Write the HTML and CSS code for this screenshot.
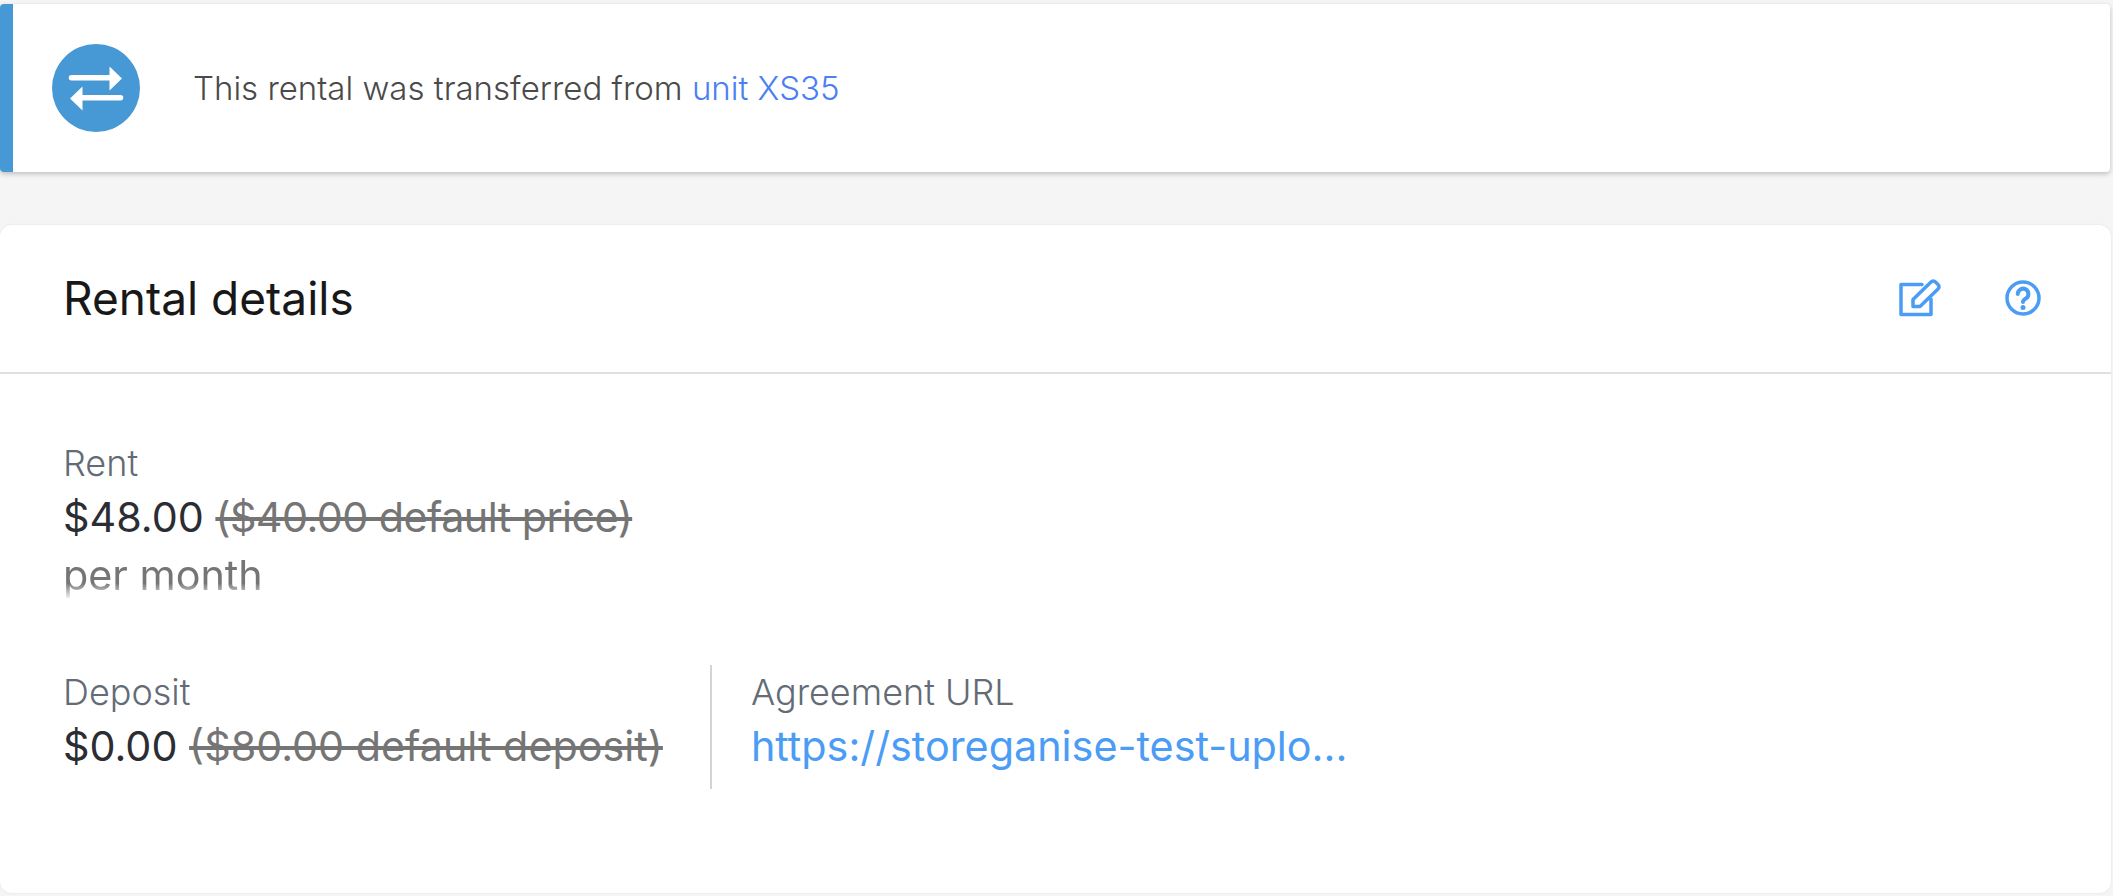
FILE: index.html
```html
<!DOCTYPE html>
<html lang="en">
<head>
<meta charset="utf-8">
<title>Rental details</title>
<link rel="stylesheet" href="styles.css">
</head>
<body>
<section class="notice">
  <span class="notice-icon">
    <svg width="88" height="88" viewBox="0 0 88 88" fill="#fff">
      <path d="M19.500 31h38v-8.500l12.500 12-12.500 12V36.500h-38a2.700 2.700 0 0 1 0-5.500z"/>
      <path d="M68.500 51h-38v-8.500L18 54.500l12.500 12V56.500h38a2.700 2.700 0 0 0 0-5.500z"/>
    </svg>
  </span>
  <p class="notice-text">This rental was transferred from <a href="#">unit XS35</a></p>
</section>
<section class="card">
  <header class="card-head">
    <h2>Rental details</h2>
    <div class="actions">
      <svg width="42" height="38" viewBox="0 0 42 38" fill="none" stroke="#4b9cf5" stroke-width="3.500" stroke-linecap="round" stroke-linejoin="round"><path d="M23 5.500H2v30h30V20"/><path d="M14 27.500v-7L32 3a3 3 0 0 1 4.500 0L39 5.500a3 3 0 0 1 0 4.500L21 27.500z"/></svg>
      <svg width="36" height="36" viewBox="0 0 36 36" fill="none" stroke="#4b9cf5" stroke-width="3.500" stroke-linecap="round" stroke-linejoin="round"><circle cx="18" cy="18" r="16"/><path d="M12.800 14a5.300 5.300 0 1 1 8.200 4.400c-1.800 1.100-3 1.800-3 3.600" stroke-width="4"/><path d="M18 27.500v.1" stroke-width="5"/></svg>
    </div>
  </header>
  <div class="card-body">
    <div class="field">
      <div class="label">Rent</div>
      <div class="value">$48.00 <s class="tight">($40.00 default price)</s></div>
      <div class="sub">per month</div>
    </div>
    <div class="row">
      <div class="field col-a">
        <div class="label">Deposit</div>
        <div class="value">$0.00 <s>($80.00 default deposit)</s></div>
      </div>
      <div class="field col-b">
        <div class="label">Agreement URL</div>
        <a class="value link" href="#">https://storeganise-test-uplo...</a>
      </div>
    </div>
  </div>
</section>
</body>
</html>
```
FILE: styles.css
```css
* { box-sizing: border-box; }
html, body { margin: 0; height: 100%; }
body {
  background: #f5f5f5;
  font-family: Inter, "Liberation Sans", sans-serif;
  overflow: hidden;
  padding-top: 4px;
}
.notice {
  height: 168px;
  width: 2110px;
  background: #fff;
  border-left: 13px solid #4799d6;
  border-radius: 4px;
  box-shadow: 0 2px 5px rgba(0,0,0,.22);
  display: flex;
  align-items: center;
  padding-left: 39px;
}
.notice-icon {
  width: 88px; height: 88px;
  border-radius: 50%;
  background: #4799d6;
  display: flex;
  flex: none;
}
.notice-text {
  margin: 0 0 0 53px;
  font-size: 33px;
  font-weight: 300;
  color: #4a4a4a;
}
.notice-text a { color: #4a80f2; text-decoration: none; }
.card {
  margin-top: 53px;
  width: 2111px;
  height: 668px;
  background: #fff;
  border-radius: 12px;
  box-shadow: 0 0 3px rgba(0,0,0,.08);
}
.card-head {
  height: 149px;
  padding: 0 70px 2px 63px;
  border-bottom: 2px solid #e0e0e0;
  display: flex; align-items: center; justify-content: space-between;
}
.card-head h2 { margin: 0; font-size: 46px; font-weight: 400; color: #181818; }
.actions { display: flex; align-items: center; gap: 64px; }
.card-body { padding: 64px 63px 0; }
.label { font-size: 36px; font-weight: 300; color: #636b76; line-height: 50px; }
.value { font-size: 41.300px; font-weight: 400; color: #2b2d33; line-height: 58px; display: block; }
.value s { color: #757575; }
.value .tight { letter-spacing: -0.55px; }
.sub {
  font-size: 41.300px; color: #757575; line-height: 58px;
  -webkit-mask-image: linear-gradient(#000 37px, transparent 54px);
  mask-image: linear-gradient(#000 37px, transparent 54px);
}
.row { display: flex; margin-top: 61px; }
.col-a { padding: 2px 47px 0 0; border-right: 2px solid #d4d4d4; height: 124px; }
.col-b { padding: 2px 0 0 39px; }
.link { color: #4b9cf5; text-decoration: none; }
```
